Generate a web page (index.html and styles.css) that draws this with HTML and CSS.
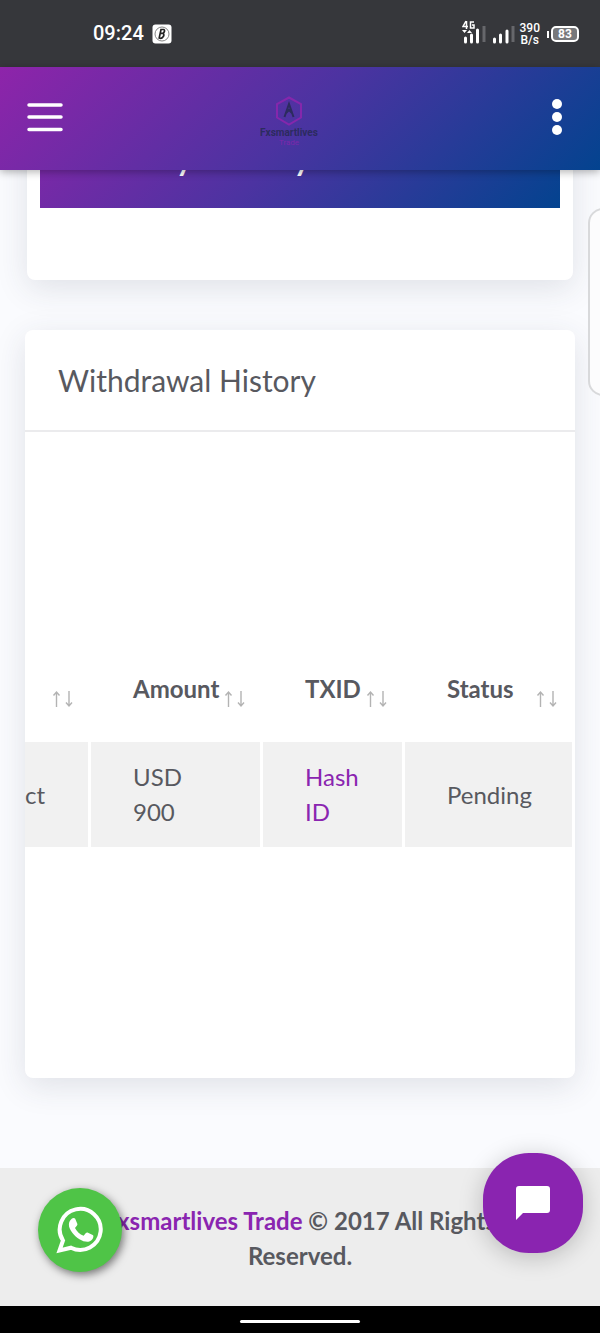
FILE: index.html
```html
<!DOCTYPE html>
<html lang="en">
<head>
    <meta charset="UTF-8">
    <meta name="viewport" content="width=device-width, initial-scale=1.0">
    <title>Withdrawal History</title>
    <link rel="stylesheet" href="styles.css">
</head>
<body>

<div class="status-bar">
    <div class="status-left">
        <span class="clock">09:24</span>
        <svg class="app-badge" viewBox="0 0 20 20" width="20" height="20">
            <rect x="0.5" y="0.5" width="19" height="19" rx="3" fill="#fff"/>
            <circle cx="10" cy="10" r="7" fill="none" stroke="#777" stroke-width="0.9"/>
            <path d="M9 5.500h3q1.500 1.500-1 3.800q2 1.500-.5 4.200q-1.500 1.300-3.300.5zM9 9.300h2" fill="none" stroke="#222" stroke-width="1.700"/>
        </svg>
    </div>
    <div class="status-right">
        <svg viewBox="0 0 24 24" width="24" height="24">
            <path d="M4 1L1 6.500h5M4.500 1v8M12 2H8.500v6H12V5h-2" fill="none" stroke="#fff" stroke-width="1.500"/>
            <path d="M0 10h5l-2.500 3zM5 13h5l-2.500-3z" fill="#fff"/>
            <path d="M3.500 18v4M9.500 15v7M15.500 10v12" stroke="#fff" stroke-width="3" stroke-linecap="round"/>
            <path d="M22 6v16" stroke="#66676b" stroke-width="3"/>
        </svg>
        <svg viewBox="0 0 24 24" width="24" height="24">
            <path d="M3.500 19v3M9.500 15v7M16 11v11" stroke="#fff" stroke-width="3" stroke-linecap="round"/>
            <path d="M22 6v16" stroke="#66676b" stroke-width="3"/>
        </svg>
        <span class="speed">390<br>B/s</span>
        <span class="battery">83</span>
    </div>
</div>

<header class="navbar">
    <button class="menu-btn" aria-label="Menu">
        <svg viewBox="0 0 36 30" width="36" height="30">
            <path d="M2 3h32M2 15h32M2 27.500h32" stroke="#fff" stroke-width="3.500" stroke-linecap="round"/>
        </svg>
    </button>
    <a class="brand" href="#">
        <svg viewBox="0 0 28 30" width="28" height="30">
            <path d="M14 1.500L26 8v13.500L14 28.500L2 21.500V8z" fill="none" stroke="#8527ac" stroke-width="2"/>
            <path d="M9.500 21L14 8l4.500 13M11 17l3-3l3 3" fill="none" stroke="#2c2b5e" stroke-width="2"/>
        </svg>
        <span class="brand-name">Fxsmartlives</span>
        <span class="brand-sub">Trade</span>
    </a>
    <button class="more-btn" aria-label="More">
        <svg viewBox="0 0 12 38" width="12" height="38">
            <circle cx="6" cy="6" r="5" fill="#fff"/>
            <circle cx="6" cy="19" r="5" fill="#fff"/>
            <circle cx="6" cy="32" r="5" fill="#fff"/>
        </svg>
    </button>
</header>

<main class="content">
    <section class="card notice-card">
        <div class="notice"><span>y</span><span>y</span></div>
    </section>

    <section class="card history-card">
        <h2 class="card-title">Withdrawal History</h2>
        <div class="table-wrap">
            <table class="history">
                <colgroup>
                    <col class="col-method">
                    <col class="col-amount">
                    <col class="col-txid">
                    <col>
                </colgroup>
                <thead>
                    <tr>
                        <th><button class="sort" aria-label="Sort"><span></span><svg class="arrows" viewBox="0 0 22 18"><use href="#sort-arrows"/></svg></button></th>
                        <th><button class="sort"><span>Amount</span><svg class="arrows" viewBox="0 0 22 18"><use href="#sort-arrows"/></svg></button></th>
                        <th><button class="sort"><span>TXID</span><svg class="arrows" viewBox="0 0 22 18"><use href="#sort-arrows"/></svg></button></th>
                        <th><button class="sort"><span>Status</span><svg class="arrows" viewBox="0 0 22 18"><use href="#sort-arrows"/></svg></button></th>
                    </tr>
                </thead>
                <tbody>
                    <tr>
                        <td class="method">ct</td>
                        <td>USD<br>900</td>
                        <td><a href="#">Hash<br>ID</a></td>
                        <td>Pending</td>
                    </tr>
                </tbody>
            </table>
        </div>
    </section>
</main>

<footer class="footer">
    <p><a href="#">Fxsmartlives Trade</a> © 2017 All Rights Reserved.</p>
    <a class="whatsapp" href="#" aria-label="WhatsApp">
        <svg viewBox="0 0 48 48" width="48" height="48">
            <path d="M3.500 44.500L7 34.500A20.500 20.500 0 1 1 15 41.700z" fill="none" stroke="#fff" stroke-width="4"/>
            <path d="M16 12.500c1-.7 2.600-.8 3.200.3l2.100 4.900c.3.900-.1 1.600-.7 2.300l-1.600 1.900c2 3.700 4.700 6.200 8.600 7.900l2.300-2.700c.7-.8 1.300-.8 2.100-.4l4.700 2.300c.8.500.8 1 .6 2c-.5 3-3.300 4.700-6 4.800c-4.800 0-11.100-3.800-14.800-8.800c-2.300-3.100-3.800-5.900-3.600-8.800c.1-2.300 1.300-4.300 3.100-5.700z" fill="#fff"/>
        </svg>
    </a>
    <button class="chat" aria-label="Open chat">
        <svg viewBox="0 0 34 34" width="34" height="34">
            <path d="M3 0h28a3 3 0 0 1 3 3v21a3 3 0 0 1-3 3H7l-7 7V3a3 3 0 0 1 3-3z" fill="#fff"/>
        </svg>
    </button>
</footer>

<div class="edge-panel"></div>
<div class="home-bar"><span></span></div>

<svg class="sprite" aria-hidden="true">
    <symbol id="sort-arrows" viewBox="0 0 22 18">
        <path d="M4.500 17V2M1.500 5.500l3-3.500l3 3.500M17 1v15M14 12.500l3 3.500l3-3.500" fill="none" stroke="#b3b3b3" stroke-width="1.400"/>
    </symbol>
</svg>

</body>
</html>
```
FILE: styles.css
```css
* {
    box-sizing: border-box;
}
body {
    position: relative;
    display: flex;
    flex-direction: column;
    min-height: 100vh;
    margin: 0;
    font-family: Lato, sans-serif;
    font-size: 24px;
    line-height: 35px;
    color: #58595f;
    background: #fafbfe;
    overflow-x: hidden;
}
a {
    color: #8a25b0;
    text-decoration: none;
}
button {
    padding: 0;
    border: none;
    background: none;
    color: inherit;
    font: inherit;
    cursor: pointer;
}
svg {
    display: block;
}
.sprite {
    position: absolute;
    width: 0;
    height: 0;
}

/* phone status bar */
.status-bar {
    display: flex;
    justify-content: space-between;
    align-items: center;
    height: 67px;
    padding: 0 21px 0 93px;
    background: #36373b;
    color: #fff;
    font-family: Roboto, sans-serif;
}
.status-left,
.status-right {
    display: flex;
    align-items: center;
    gap: 8px;
}
.status-right {
    gap: 5px;
}
.status-right svg {
    margin-bottom: 3px;
}
.clock {
    font-size: 20px;
    font-weight: 500;
}
.speed {
    font-size: 12px;
    font-weight: 500;
    line-height: 12px;
    text-align: center;
}
.battery {
    position: relative;
    width: 28px;
    margin-left: 6px;
    border: 2px solid #fff;
    border-radius: 5px;
    background: #77787b;
    font-size: 12px;
    font-weight: 700;
    line-height: 12px;
    text-align: center;
}
.battery::before {
    content: "";
    position: absolute;
    left: -6px;
    top: 3px;
    width: 2px;
    height: 7px;
    background: #fff;
}

/* top navigation */
.navbar {
    position: relative;
    z-index: 2;
    display: flex;
    justify-content: space-between;
    align-items: center;
    height: 103px;
    padding: 0 37px 4px 27px;
    background: linear-gradient(135deg, #8e24aa 0%, #4c33a1 50%, #03438f 100%);
    box-shadow: 0 2px 8px rgba(0, 0, 0, 0.3);
}
.more-btn {
    display: flex;
    justify-content: flex-end;
    width: 48px;
}
.brand {
    display: flex;
    flex-direction: column;
    align-items: center;
    margin-top: 8px;
    font-family: Roboto, sans-serif;
}
.brand-name {
    color: #2c2b5e;
    font-size: 10px;
    font-weight: 700;
    line-height: 13px;
}
.brand-sub {
    color: #7c28ab;
    font-size: 8px;
    line-height: 7px;
}

.content {
    flex: 1;
    padding: 0 25px 90px;
    overflow: hidden;
}
.card {
    border-radius: 8px;
    background: #fff;
    box-shadow: 0 8px 32px rgba(50, 55, 80, 0.13);
}
.notice-card {
    margin: -120px 2px 50px;
    padding: 14px 13px 72px;
}
.notice {
    display: flex;
    gap: 102px;
    height: 144px;
    padding: 78px 136px 0;
    background: linear-gradient(135deg, #8e24aa 0%, #4c33a1 50%, #03438f 100%);
    color: #fff;
    font-size: 30px;
    font-weight: 700;
}
.card-title {
    margin: 0;
    padding: 33px 33px 32px;
    border-bottom: 2px solid #ebebed;
    font-size: 30px;
    font-weight: 400;
}

/* withdrawal table */
.table-wrap {
    padding: 208px 0 228px;
    overflow: hidden;
}
.history {
    width: calc(100% + 3px);
    margin-left: -3px;
    border-spacing: 3px;
    table-layout: fixed;
}
.col-method {
    width: 63px;
}
.col-amount {
    width: 169px;
}
.col-txid {
    width: 139px;
}
.history th {
    padding: 28px 14px 33px 42px;
    font-weight: 700;
    text-align: left;
}
.history th:first-child {
    padding-left: 0;
}
.sort {
    display: flex;
    justify-content: space-between;
    align-items: center;
    width: 100%;
    height: 35px;
}
.arrows {
    flex: none;
    width: 22px;
    height: 18px;
    margin-top: 20px;
}
.history td {
    height: 105px;
    padding: 17px 0 18px 42px;
    background: #f1f1f1;
}
.history .method {
    padding-left: 0;
    padding-right: 43px;
    text-align: right;
}

.footer {
    position: relative;
    padding: 35px 100px 33px;
    background: #ededed;
    font-weight: 700;
    text-align: center;
}
.footer p {
    margin: 0;
}
.whatsapp {
    position: absolute;
    left: 38px;
    bottom: 34px;
    display: grid;
    place-items: center;
    width: 84px;
    height: 84px;
    border-radius: 50%;
    background: #4fc447;
    box-shadow: 2px 3px 8px rgba(0, 0, 0, 0.5);
}
.chat {
    position: absolute;
    right: 17px;
    bottom: 53px;
    display: grid;
    place-items: center;
    width: 100px;
    height: 100px;
    border-radius: 46px;
    background: #8a24b0;
    box-shadow: 0 4px 24px rgba(0, 0, 0, 0.22);
}

/* handle of the system side panel */
.edge-panel {
    position: absolute;
    top: 208px;
    right: -18px;
    width: 30px;
    height: 188px;
    border: 2px solid #d8d9db;
    border-radius: 28px;
    background: #fcfcfd;
}
.home-bar {
    display: flex;
    justify-content: center;
    align-items: center;
    height: 27px;
    padding-top: 3px;
    background: #000;
}
.home-bar span {
    width: 120px;
    height: 3px;
    border-radius: 2px;
    background: #fff;
}
```
